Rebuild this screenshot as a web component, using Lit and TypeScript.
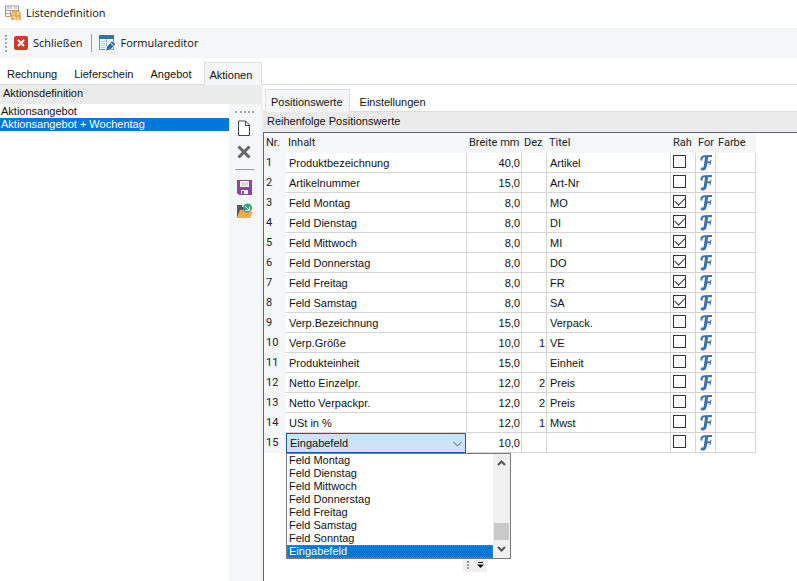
import { LitElement, html, css, svg } from "lit";
import { customElement, state } from "lit/decorators.js";
import { classMap } from "lit/directives/class-map.js";

interface Row {
  inhalt: string;
  breite: string;
  dez: string;
  titel: string;
  rahmen: boolean;
}

const row = (inhalt: string, breite: string, dez: string, titel: string, rahmen = false): Row => ({
  inhalt,
  breite,
  dez,
  titel,
  rahmen,
});

const ROWS: Row[] = [
  row("Produktbezeichnung", "40,0", "", "Artikel"),
  row("Artikelnummer", "15,0", "", "Art-Nr"),
  row("Feld Montag", "8,0", "", "MO", true),
  row("Feld Dienstag", "8,0", "", "DI", true),
  row("Feld Mittwoch", "8,0", "", "MI", true),
  row("Feld Donnerstag", "8,0", "", "DO", true),
  row("Feld Freitag", "8,0", "", "FR", true),
  row("Feld Samstag", "8,0", "", "SA", true),
  row("Verp.Bezeichnung", "15,0", "", "Verpack."),
  row("Verp.Größe", "10,0", "1", "VE"),
  row("Produkteinheit", "15,0", "", "Einheit"),
  row("Netto Einzelpr.", "12,0", "2", "Preis"),
  row("Netto Verpackpr.", "12,0", "2", "Preis"),
  row("USt in %", "12,0", "1", "Mwst"),
  row("Eingabefeld", "10,0", "", ""),
];

const OPTIONS = [
  "Feld Montag",
  "Feld Dienstag",
  "Feld Mittwoch",
  "Feld Donnerstag",
  "Feld Freitag",
  "Feld Samstag",
  "Feld Sonntag",
  "Eingabefeld",
];

const icon = (w: number, h: number, body: unknown) =>
  html`<svg width=${w} height=${h} viewBox="0 0 ${w} ${h}" fill="none" aria-hidden="true">${body}</svg>`;

const appIcon = icon(16, 16, svg`
  <path d="M.5 11.500V1h13v5" fill="#fff" stroke="#9b8f96"/>
  <path d="M2 3h5M9 3h3M.5 5.500h13M.5 8.500h6M5.500 5.500v6M.5 11.500h5" stroke="#b79c88"/>
  <path d="M7 6h8v2h1v7H6V9h1z" fill="#e3b057"/>
  <path d="M9 8v2M13 7v3M8 12h2v3M13 12v3" stroke="#fff6df"/>`);

const closeIcon = icon(14, 14, svg`
  <rect width="14" height="14" rx="2" fill="#d03a2b"/>
  <path d="M4 4l6 6M10 4l-6 6" stroke="#fff" stroke-width="2"/>`);

const formIcon = icon(17, 16, svg`
  <path d="M.5 1.500h14v13H.5z" fill="#fff" stroke="#5b8fc0"/>
  <path d="M0 0h15v4H0z" fill="#3373ad"/>
  <path d="M2 6.500h4M2 8.500h4M2 10.500h4M2 12.500h4" stroke="#a7c6e0"/>
  <path d="M7.500 4v10" stroke="#8db4d6"/>
  <path d="M6.500 16l1.200-4.500L13 5.500l4 3.500-5.500 6z" fill="#2f6da8" stroke="#f5f6f8"/>
  <path d="M11.500 8l3 2.700" stroke="#fff"/>`);

const newIcon = icon(14, 16, svg`
  <path d="M1.500 1h7l4 4v10.500h-11z" fill="#fff" stroke="#444"/>
  <path d="M8.500 1v4.500h4" stroke="#444"/>`);

const deleteIcon = icon(14, 14, svg`
  <path d="M1.500 1.500l11 11M12.500 1.500l-11 11" stroke="#666" stroke-width="3"/>`);

const saveIcon = icon(15, 15, svg`
  <path d="M0 0h15v15H2l-2-2z" fill="#8a45a5"/>
  <path d="M3 1h9v6H3zM4 10h7v4H4z" fill="#fff"/>
  <path d="M4 3h7M4 5h7" stroke="#c9a8d6"/>
  <path d="M5 11h2v3H5z" fill="#8a45a5"/>`);

const openIcon = icon(17, 16, svg`
  <path d="M1 15V2h5v2h4v5H4z" fill="#59595c"/>
  <path d="M1 15l3-8h4l2 2h7l-3 6z" fill="#e9b04b"/>
  <circle cx="11.500" cy="5" r="4.500" fill="#2da57c"/>
  <path d="M9 3l4 4M13.500 3.500V7.500h-4" stroke="#fff"/>`);

const scriptF = icon(13, 17, svg`
  <path d="M1.800 6.500C.8 4 2 2.300 4.500 2.200L12 2" stroke="#3a70b0" stroke-width="2"/>
  <path d="M6.700 2.500L5.200 12.500C4.800 15 3 15.500 1 14.500" stroke="#3a70b0" stroke-width="3"/>
  <path d="M6 8.300h4" stroke="#3a70b0" stroke-width="2"/>
  <path d="M11 6l-1 5" stroke="#3a70b0"/>`);

const chevronDown = icon(9, 6, svg`<path d="M.5 1l4 4 4-4" stroke="#4d5f6f"/>`);
const scrollUp = icon(9, 6, svg`<path d="M1 5l3.500-3.500L8 5" stroke="#555" stroke-width="2"/>`);
const scrollDown = icon(9, 6, svg`<path d="M1 1l3.500 3.500L8 1" stroke="#555" stroke-width="2"/>`);
const overflowIcon = icon(7, 7, svg`<path d="M1 .5h5" stroke="#111"/><path d="M0 2.500h7L3.500 6z" fill="#111"/>`);

@customElement("app-root")
export class AppRoot extends LitElement {
  @state() private docTab = "Aktionen";
  @state() private posTab = "Positionswerte";
  @state() private selectedList = "Aktionsangebot + Wochentag";
  @state() private choice = "Eingabefeld";

  static styles = css`
    :host {
      display: flex;
      flex-direction: column;
      min-height: 100vh;
      background: #fff;
      color: #111;
      font: 11px/13px "Liberation Sans", Arial, sans-serif;
    }
    * { box-sizing: border-box; }
    svg { display: block; flex: none; }
    button {
      margin: 0;
      padding: 0;
      border: 0;
      background: none;
      color: inherit;
      font: inherit;
      text-align: left;
      white-space: nowrap;
    }
    h1, h2, ul { margin: 0; padding: 0; font: inherit; list-style: none; }

    .title {
      display: flex;
      align-items: center;
      gap: 5px;
      height: 28px;
      padding: 0 5px 2px;
      font: 500 11px/16px "Open Sans", "Noto Sans", sans-serif;
    }
    .toolbar {
      display: flex;
      align-items: center;
      height: 30px;
      padding-left: 5px;
      background: #f5f6f8;
      font: 500 11px/16px "Open Sans", "Noto Sans", sans-serif;
    }
    .grip { height: 17px; border-left: 2px dotted #a3a5a8; }
    .tool { display: flex; align-items: center; gap: 5px; margin-left: 7px; }
    .sep { width: 1px; height: 18px; margin-left: 8px; background: #9a9a9a; }

    .tabs { display: flex; align-items: flex-end; border-bottom: 1px solid #dcdde0; }
    .tab { height: 22px; border: 1px solid transparent; border-bottom: 0; }
    .tab.active { border-color: #dcdde0; background: #f5f6f8; margin-bottom: -1px; height: 23px; }
    .doc-tabs { padding-top: 4px; }
    .doc-tabs .tab { padding: 2px 9px 0 6px; }
    .doc-tabs .tab.active { padding-left: 4px; margin-left: 3px; }

    .main {
      flex: 1;
      display: grid;
      grid-template-columns: 229px 32px minmax(0, 1fr);
      grid-template-rows: 19px 1fr;
    }
    .list-head { grid-column: 1 / 3; padding: 2px 3px; background: #ebebeb; }
    .lists button { display: block; width: 100%; height: 13px; padding-left: 1px; }
    .lists .selected { background: #0078d7; color: #fff; }
    .lists { padding-top: 1px; }
    .side {
      display: flex;
      flex-direction: column;
      align-items: center;
      background: #f5f6f8;
      padding: 7px 2px 0 0;
    }
    .side-grip { width: 19px; border-top: 2px dotted #a3a5a8; margin-bottom: 3px; }
    .side button { height: 24px; }
    .side-sep { width: 19px; height: 1px; margin: 5px 0; background: #9a9a9a; }

    .detail {
      grid-column: 3;
      grid-row: 1 / 3;
      display: flex;
      flex-direction: column;
      border-left: 2px solid #f0f0f0;
    }
    .pos-tabs { padding: 4px 0 0 2px; }
    .pos-tabs .tab { padding: 3px 6px 0 5px; margin-right: 4px; }
    .detail-head { height: 20px; padding: 3px 4px; background: #ebebeb; }
    .sheet { flex: 1; border-top: 1px solid #66666c; border-left: 1px solid #66666c; }

    table { border-collapse: separate; border-spacing: 0; table-layout: fixed; width: 492px; }
    th, td { height: 20px; text-align: left; font-weight: 400; white-space: nowrap; overflow: hidden; }
    th { background: #f5f6f8; color: #222; font: 11px/14px Roboto, "Noto Sans", sans-serif; padding: 0 0 0 2px; }
    td { border-right: 1px solid #d5d5d5; border-bottom: 1px solid #d5d5d5; padding: 1px 3px 0; }
    .num { text-align: right; padding: 1px 1px 0; }
    .tick { padding: 0 2px; }
    .font { padding: 0 4px; }
    .font button { display: block; }
    .c-nr { width: 22px; }
    .c-inhalt { width: 181px; }
    .c-breite { width: 55px; }
    .c-dez { width: 25px; }
    .c-titel { width: 124px; }
    .c-rah { width: 25px; }
    .c-for { width: 20px; }
    .c-farbe { width: 40px; }
    .combo-cell { position: relative; overflow: visible; padding: 0; border: 0; }

    .check {
      appearance: none;
      display: block;
      width: 13px;
      height: 13px;
      margin: 0 0 2px;
      border: 1px solid #333;
      background: #fff;
    }
    .check:checked::after {
      content: "";
      display: block;
      width: 9px;
      height: 5px;
      margin: 1px;
      border: solid #333;
      border-width: 0 0 1px 1px;
      transform: rotate(-45deg);
    }

    .combo {
      appearance: none;
      display: block;
      width: 180px;
      height: 20px;
      margin: 0;
      padding: 1px 3px 0;
      border: 1px solid #1f5c93;
      border-radius: 0;
      outline: 0;
      background: #cce4f7;
      color: #111;
      font: inherit;
    }
    .combo-arrow { position: absolute; right: 5px; top: 8px; pointer-events: none; }
    .popup {
      position: absolute;
      z-index: 1;
      top: 20px;
      left: 0;
      display: flex;
      width: 225px;
      border: 1px solid #7a7a7a;
      background: #fff;
    }
    .options { flex: 1; }
    .options button { display: block; width: 100%; height: 13px; padding-left: 2px; }
    .options .selected { background: #0078d7; color: #fff; outline: 1px dotted #4f8fc0; outline-offset: -1px; }
    .scroll {
      display: flex;
      flex-direction: column;
      align-items: center;
      width: 17px;
      padding: 6px 0;
      background: #f0f0f0;
    }
    .thumb { width: 15px; height: 17px; margin: auto 0 6px; background: #c9c9c9; }

    .overflow {
      display: flex;
      align-items: center;
      gap: 8px;
      width: 24px;
      height: 14px;
      margin: 105px 0 0 199px;
      padding-left: 4px;
      background: #f0f0f0;
    }
    .overflow-grip { height: 8px; border-left: 2px dotted #999; }
  `;

  private tabs(names: string[], active: string, pick: (name: string) => void) {
    return names.map(
      (name) => html`<button
        role="tab"
        aria-selected=${name === active}
        class=${classMap({ tab: true, active: name === active })}
        @click=${() => pick(name)}
      >${name}</button>`,
    );
  }

  private combo() {
    return html`<td class="combo-cell">
      <select class="combo" aria-label="Inhalt" .value=${this.choice}
        @change=${(e: Event) => (this.choice = (e.target as HTMLSelectElement).value)}>
        ${OPTIONS.map((o) => html`<option ?selected=${o === this.choice}>${o}</option>`)}
      </select>
      <span class="combo-arrow">${chevronDown}</span>
      <div class="popup">
        <div class="options" role="listbox" aria-label="Inhalt">
          ${OPTIONS.map(
            (o) => html`<button role="option" aria-selected=${o === this.choice}
              class=${classMap({ selected: o === this.choice })}
              @click=${() => (this.choice = o)}>${o}</button>`,
          )}
        </div>
        <div class="scroll">${scrollUp}<div class="thumb"></div>${scrollDown}</div>
      </div>
    </td>`;
  }

  render() {
    return html`
      <header class="title">${appIcon}<h1>Listendefinition</h1></header>
      <nav class="toolbar">
        <span class="grip"></span>
        <button class="tool">${closeIcon}Schließen</button>
        <span class="sep"></span>
        <button class="tool">${formIcon}Formulareditor</button>
      </nav>
      <div class="tabs doc-tabs" role="tablist">
        ${this.tabs(["Rechnung", "Lieferschein", "Angebot", "Aktionen"], this.docTab, (n) => (this.docTab = n))}
      </div>
      <main class="main">
        <h2 class="list-head">Aktionsdefinition</h2>
        <ul class="lists">
          ${["Aktionsangebot", "Aktionsangebot + Wochentag"].map(
            (n) => html`<li><button class=${classMap({ selected: n === this.selectedList })}
              @click=${() => (this.selectedList = n)}>${n}</button></li>`,
          )}
        </ul>
        <div class="side">
          <span class="side-grip"></span>
          <button aria-label="Neu">${newIcon}</button>
          <button aria-label="Löschen">${deleteIcon}</button>
          <span class="side-sep"></span>
          <button aria-label="Speichern">${saveIcon}</button>
          <button aria-label="Öffnen">${openIcon}</button>
        </div>
        <section class="detail">
          <div class="tabs pos-tabs" role="tablist">
            ${this.tabs(["Positionswerte", "Einstellungen"], this.posTab, (n) => (this.posTab = n))}
          </div>
          <h2 class="detail-head">Reihenfolge Positionswerte</h2>
          <div class="sheet">
            <table>
              <thead>
                <tr>
                  <th class="c-nr">Nr.</th>
                  <th class="c-inhalt">Inhalt</th>
                  <th class="c-breite">Breite mm</th>
                  <th class="c-dez">Dez</th>
                  <th class="c-titel">Titel</th>
                  <th class="c-rah">Rah</th>
                  <th class="c-for">For</th>
                  <th class="c-farbe">Farbe</th>
                </tr>
              </thead>
              <tbody>
                ${ROWS.map(
                  (r, i) => html`<tr>
                    <th scope="row">${i + 1}</th>
                    ${i === ROWS.length - 1 ? this.combo() : html`<td>${r.inhalt}</td>`}
                    <td class="num">${r.breite}</td>
                    <td class="num">${r.dez}</td>
                    <td>${r.titel}</td>
                    <td class="tick"><input class="check" type="checkbox" aria-label="Rahmen ${i + 1}" ?checked=${r.rahmen} /></td>
                    <td class="font"><button aria-label="Schrift ${i + 1}">${scriptF}</button></td>
                    <td></td>
                  </tr>`,
                )}
              </tbody>
            </table>
            <div class="overflow"><span class="overflow-grip"></span>${overflowIcon}</div>
          </div>
        </section>
      </main>
    `;
  }
}
